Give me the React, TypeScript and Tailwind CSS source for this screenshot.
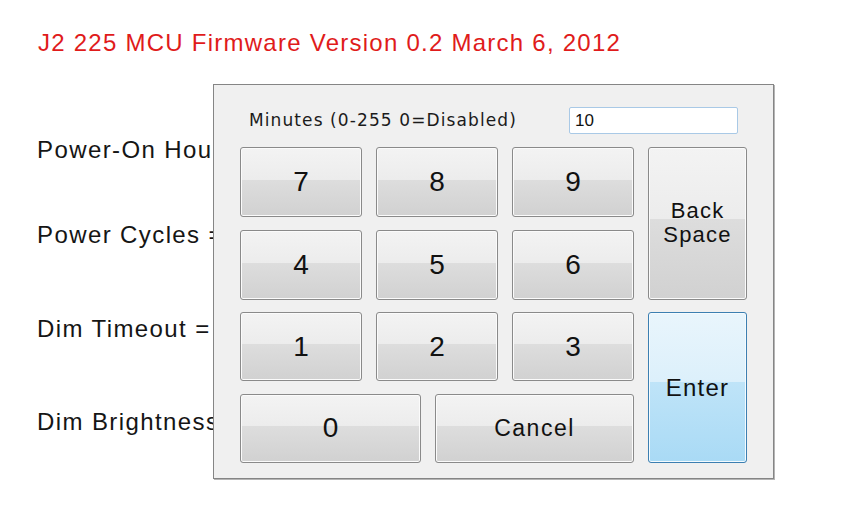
const keyBase =
  "flex items-center justify-center rounded-[3px] border border-[#8a8a8a] bg-[linear-gradient(to_bottom,#f3f3f3_0%,#ececec_47%,#dddddd_47%,#d1d1d1_100%)] shadow-[inset_0_0_0_1px_#fbfbfb] text-[#111] cursor-pointer";

function Key({ label, className = "" }: { label: string; className?: string }) {
  return (
    <button className={`${keyBase} text-[28px] leading-none ${className}`}>
      {label}
    </button>
  );
}

export default function App() {
  const rows = [
    ["7", "8", "9"],
    ["4", "5", "6"],
    ["1", "2", "3"],
  ];

  return (
    <div className="relative w-[855px] h-[510px] overflow-hidden bg-white font-['Liberation_Sans',Arial,sans-serif]">
      {/* Main page */}
      <div className="pt-[31px] pl-[37px] text-[24px] leading-[24px]">
        <h1 className="ml-[1px] text-[#e01b1b] tracking-[1.25px]">
          J2 225 MCU Firmware Version 0.2 March 6, 2012
        </h1>
        <div className="flex flex-col text-[#151515] tracking-[1.4px]">
          <p className="mt-[83px]">Power-On Hours = 1234</p>
          <p className="mt-[61px]">Power Cycles = 56</p>
          <p className="mt-[70px]">Dim Timeout = 10</p>
          <p className="mt-[69px]">Dim Brightness = 50</p>
        </div>
      </div>

      {/* Keypad dialog */}
      <div className="absolute left-[213px] top-[84px] w-[561px] h-[395px] border border-[#858585] shadow-[1px_1px_0_0_#b5b5b5] bg-[#f0f0f0] pl-[26px] pt-[22px]">
        <div className="flex items-center w-[498px] h-[27px]">
          <span className="ml-[9px] font-['DejaVu_Sans',sans-serif] text-[17px] tracking-[1.1px] text-[#1b1b1b]">
            Minutes (0-255 0=Disabled)
          </span>
          <input
            readOnly
            value="10"
            className="ml-auto w-[169px] h-[27px] rounded-[2px] border border-[#a9c9e6] bg-white pl-[5px] text-[17px] text-[#111] outline-none"
          />
        </div>

        <div className="mt-[13px] grid grid-cols-[122px_122px_122px_99px] grid-rows-[70px_70px_69px_69px] gap-x-[14px] gap-y-[12.67px]">
          {rows[0].map((k) => (
            <Key key={k} label={k} />
          ))}
          <button
            className={`${keyBase} row-span-2 flex-col text-[22px] leading-[24px] tracking-[1.2px]`}
          >
            <span>Back</span>
            <span>Space</span>
          </button>
          {rows[1].map((k) => (
            <Key key={k} label={k} />
          ))}
          {rows[2].map((k) => (
            <Key key={k} label={k} />
          ))}
          <button className="row-span-2 flex items-center justify-center rounded-[3px] border border-[#3c7fb1] bg-[linear-gradient(to_bottom,#e9f5fc_0%,#dcf0fb_46%,#bfe4f8_46%,#a9daf5_100%)] shadow-[inset_0_0_0_1px_#f4fbff] text-[24px] leading-none tracking-[1.2px] text-[#111] cursor-pointer">
            Enter
          </button>
          <div className="col-span-3 flex gap-[14px]">
            <Key label="0" className="w-[181px]" />
            <button
              className={`${keyBase} w-[199px] text-[23px] leading-none tracking-[1.5px]`}
            >
              Cancel
            </button>
          </div>
        </div>
      </div>
    </div>
  );
}
